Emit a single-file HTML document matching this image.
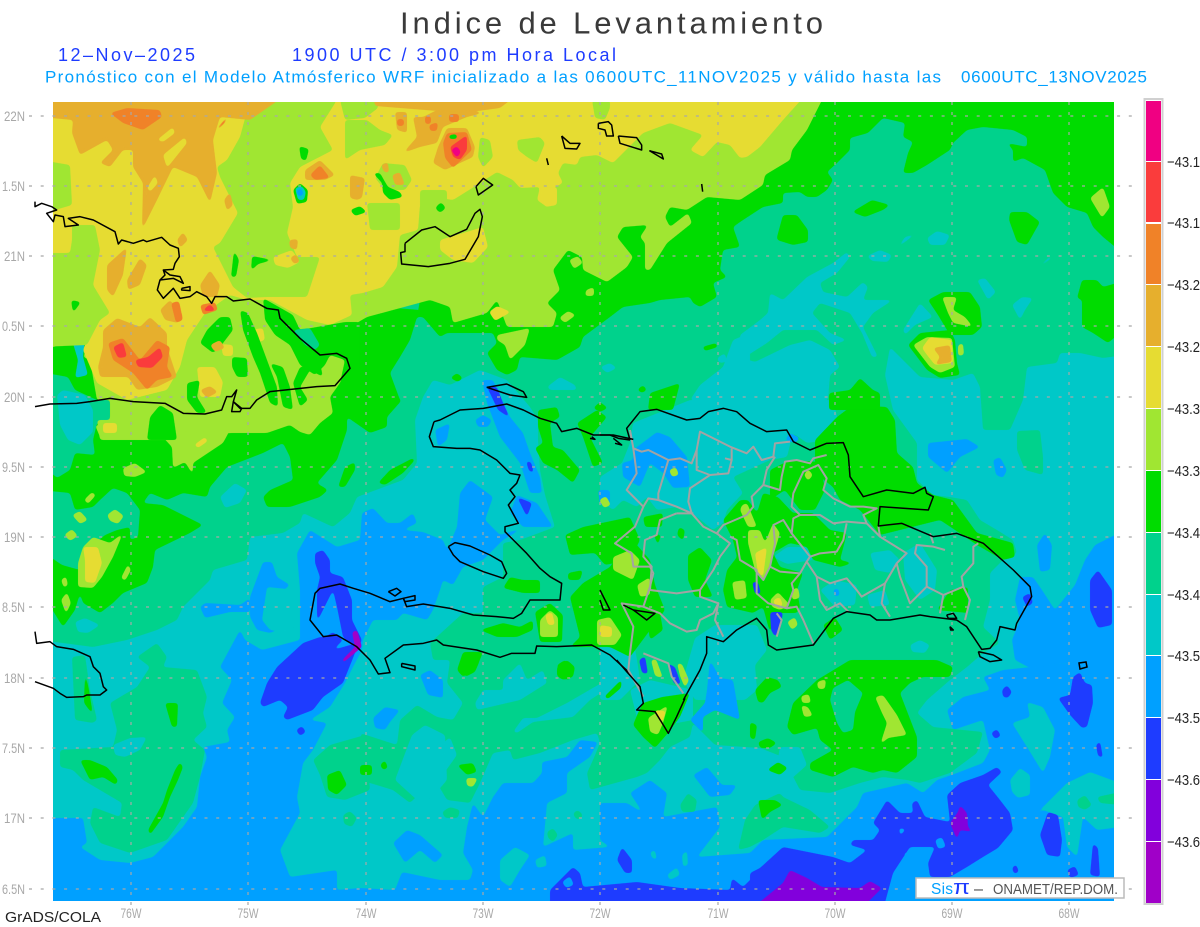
<!DOCTYPE html>
<html><head><meta charset="utf-8"><title>Indice de Levantamiento</title>
<style>
html,body{margin:0;padding:0;background:#fff}
svg{display:block;font-family:"Liberation Sans",sans-serif}
.m{fill:#f00082}.r{fill:#fa3c3c}.o{fill:#f08228}.d{fill:#e6af2d}.y{fill:#e6dc32}.l{fill:#a0e632}.g{fill:#00dc00}.e{fill:#00d28c}.t{fill:#00c8c8}.s{fill:#00a0ff}.b{fill:#1e3cff}.v{fill:#8200dc}.p{fill:#a000c8}
.mg polygon{filter:url(#rd)}
.k polyline{fill:none;stroke:#000;stroke-width:4.5;stroke-linejoin:round}
.h polyline{fill:none;stroke:#a3a3a3;stroke-width:6;stroke-linejoin:round}
.ax{fill:#a8a8a8;font-size:14px}
.cb{font-size:15px;fill:#222}
</style></head><body>
<svg width="1200" height="927" viewBox="0 0 1200 927" xmlns="http://www.w3.org/2000/svg">
<defs><clipPath id="mp"><rect x="53" y="102" width="1061" height="799"/></clipPath>
<filter id="rd" x="-50%" y="-50%" width="200%" height="200%" color-interpolation-filters="sRGB"><feGaussianBlur stdDeviation="1.5"/><feComponentTransfer><feFuncA type="linear" slope="7" intercept="-3"/></feComponentTransfer></filter></defs>
<rect width="1200" height="927" fill="#fff"/>
<g clip-path="url(#mp)"><g class="mg">
<rect class="t" x="53" y="102" width="1061" height="799"/>
<!-- sky south -->
<polygon class="s" points="40,818 83,818 87,843 80,847 100,860 130,863 153,857 183,827 197,807 200,777 207,757 203,747 230,742 227,730 235,717 222,703 232,680 220,667 240,630 245,640 262,650 300,640 300,590 297,553 310,530 337,547 360,540 362,513 373,508 387,523 400,523 413,513 417,523 403,530 423,532 443,540 447,550 457,527 460,493 470,480 493,497 485,520 500,535 525,527 503,540 483,560 463,567 453,585 443,580 440,590 433,610 427,620 403,613 397,620 373,620 363,640 362,650 353,667 345,683 330,707 310,720 327,723 313,750 303,763 297,797 300,813 280,850 290,877 337,870 337,890 360,888 395,890 402,872 440,880 470,880 473,870 463,853 467,827 473,803 483,817 493,797 503,783 533,783 542,773 542,762 567,757 580,740 598,742 590,757 567,773 567,793 547,803 543,847 573,833 573,850 610,847 600,840 600,803 627,803 643,813 630,793 650,780 667,793 663,817 717,807 720,827 697,857 750,853 763,840 827,837 857,807 863,793 907,783 923,793 937,780 957,773 983,763 990,750 983,720 953,730 947,710 963,697 990,690 983,677 1003,670 1067,663 1125,658 1125,915 40,915"/>
<polygon class="s" points="250,597 263,562 272,562 277,577 290,585 280,593 267,617 277,630 270,633 257,630 250,617"/>
<polygon class="s" points="200,607 205,603 240,605 250,598 250,612 230,612 205,618"/>
<!-- seagreen main -->
<polygon class="e" points="40,90 40,640 93,647 127,640 157,630 177,620 183,607 210,580 213,570 247,560 250,537 283,533 300,523 303,513 333,527 350,513 357,497 403,480 417,463 415,420 423,397 433,380 450,385 480,370 507,380 530,407 538,420 538,440 540,470 545,495 555,527 520,540 503,543 503,577 483,587 483,613 463,613 430,643 433,660 450,660 447,683 463,703 453,720 437,717 417,705 400,720 397,745 360,733 367,757 360,780 393,790 410,803 423,790 413,770 450,737 457,755 437,783 447,800 470,803 480,783 493,753 510,750 513,760 540,753 573,740 597,733 600,743 593,760 587,773 590,790 637,777 647,773 660,760 670,747 690,737 693,723 715,745 760,748 783,757 800,790 830,793 860,783 883,777 907,780 920,783 950,773 977,753 983,732 933,727 917,713 927,700 950,680 967,667 983,653 1000,643 983,627 990,600 990,573 1003,560 1017,553 1013,540 997,530 980,520 967,500 950,497 933,495 917,480 917,443 893,410 885,375 890,347 920,377 953,380 973,373 980,387 983,430 1010,430 1023,400 1027,367 1057,363 1060,353 1080,353 1103,358 1125,355 1125,90"/>
<polygon class="e" points="157,643 167,657 163,667 197,670 207,697 203,713 207,727 193,740 205,750 200,777 193,803 167,840 130,853 100,843 90,823 93,807 120,817 122,803 83,780 73,770 60,767 60,750 113,747 117,730 110,703 137,687 150,667 137,657"/>
<polygon class="e" points="72,657 85,655 90,690 97,720 93,723 75,720"/>
<polygon class="e" points="738,850 745,820 755,805 765,800 780,793 783,797 810,810 830,827 820,833 783,827 763,840 750,847"/>
<polygon class="e" points="313,760 330,745 365,735 370,790 345,800 327,797 320,775"/>
<polygon class="e" points="343,815 350,811 357,818 352,827 344,824"/>
<polygon class="e" points="442,812 450,807 460,810 458,818 445,818"/>
<polygon class="e" points="573,813 578,810 583,815 580,820 575,818"/>
<polygon class="e" points="547,832 553,828 558,835 553,842 548,838"/>
<polygon class="e" points="680,805 688,793 697,800 695,812 682,812"/>
<polygon class="e" points="1017,431 1040,430 1043,457 1043,475 1025,470 1017,450"/>
<!-- teal overlays -->
<polygon class="t" points="113,745 130,738 147,737 140,750 125,757 115,755"/>
<polygon class="t" points="267,587 297,590 297,627 282,632 270,630 262,620"/>
<polygon class="t" points="740,335 760,320 768,313 770,293 783,300 807,277 833,263 847,252 850,257 837,273 820,283 823,292 847,297 863,282 868,287 863,300 893,300 873,313 863,327 878,357 872,357 862,333 850,313 820,303 812,313 830,333 847,340 833,345 817,330 783,330 767,343 745,357 740,357"/>
<polygon class="t" points="740,357 755,362 790,345 810,340 830,350 840,367 830,375 828,400 740,410"/>
<polygon class="t" points="750,333 733,340 723,367 700,385 690,400 750,410"/>
<polygon class="t" points="690,400 833,400 838,420 827,440 807,443 793,433 787,457 770,460 733,477 743,493 727,510 723,523 713,530 697,517 677,507 657,510 647,497 637,507 623,500 613,510 600,500 600,477 622,463 630,443 633,423"/>
<polygon class="t" points="773,557 787,547 813,547 813,560 787,564"/>
<polygon class="t" points="820,590 835,580 857,585 855,605 835,607"/>
<polygon class="t" points="867,595 885,590 890,605 870,607"/>
<polygon class="t" points="870,553 890,550 900,560 890,573 875,570"/>
<polygon class="t" points="903,553 920,543 937,570 935,590 920,600 905,580"/>
<polygon class="t" points="910,645 920,640 930,645 925,653 912,652"/>
<polygon class="t" points="600,617 630,620 637,660 640,680 620,700 600,700"/>
<polygon class="t" points="695,638 715,625 757,625 767,650 755,665 757,690 745,700 695,700 683,680"/>
<polygon class="t" points="630,690 650,680 693,690 693,720 640,730"/>
<polygon class="t" points="475,703 483,690 503,690 503,680 520,663 527,680 543,670 547,683 520,700 490,707 477,710"/>
<polygon class="t" points="513,732 523,718 537,718 567,703 610,678 610,687 590,700 573,717 533,722 517,733"/>
<polygon class="t" points="412,735 425,725 445,735 447,780 430,800 417,800 395,780"/>
<polygon class="t" points="500,860 515,847 530,855 520,870 510,887 500,880"/>
<polygon class="t" points="535,860 545,855 547,866 537,868"/>
<polygon class="t" points="667,875 677,867 680,875 670,880"/>
<polygon class="t" points="650,852 655,850 657,860 652,858"/>
<polygon class="t" points="682,855 687,850 688,865 683,867"/>
<polygon class="t" points="780,747 800,747 807,765 790,780 790,793 780,793 775,775"/>
<polygon class="t" points="1027,702 1043,707 1055,730 1050,757 1043,773 1027,747 1012,723 1030,717"/>
<polygon class="t" points="1010,780 1020,768 1030,775 1030,795 1018,798 1012,792"/>
<polygon class="t" points="1017,833 1043,807 1067,783 1090,772 1120,783 1120,827 1097,830 1083,817 1077,857 1067,847 1063,817 1043,810"/>
<polygon class="e" points="1077,800 1085,795 1092,805 1085,810 1078,807"/>
<polygon class="e" points="1097,797 1120,792 1120,805 1100,803"/>
<polygon class="t" points="220,497 235,483 247,490 240,503 225,508"/>
<polygon class="t" points="45,430 95,430 105,447 95,452 85,447 77,437 45,440"/>
<polygon class="t" points="75,622 85,618 100,625 88,633 78,632"/>
<polygon class="t" points="367,350 372,347 378,358 370,360"/>
<polygon class="t" points="600,367 610,363 617,368 607,373"/>
<polygon class="t" points="547,387 560,377 575,385 577,390 550,390"/>
<polygon class="t" points="717,358 725,353 727,362 719,363"/>
<polygon class="t" points="927,238 937,231 950,235 945,245 930,245"/>
<polygon class="t" points="897,248 905,237 917,233 905,242 898,248"/>
<polygon class="t" points="867,256 880,250 892,255 888,262 872,261"/>
<polygon class="t" points="1040,265 1050,256 1052,258 1043,265"/>
<polygon class="t" points="977,280 985,278 996,292 988,300"/>
<polygon class="t" points="1012,305 1022,297 1033,298 1025,310 1020,320"/>
<polygon class="t" points="903,330 920,303 933,317 915,325 905,335"/>
<!-- sky overlays -->
<polygon class="s" points="482,380 493,380 510,417 523,433 530,453 540,477 542,493 530,493 520,463 500,437 487,403"/>
<polygon class="s" points="517,495 537,503 553,527 523,527 510,513"/>
<polygon class="s" points="475,420 483,415 492,420 488,427 478,427"/>
<polygon class="s" points="435,430 450,423 447,440 438,447"/>
<polygon class="s" points="598,490 610,490 610,505 600,505"/>
<polygon class="s" points="633,450 657,432 670,437 687,457 690,487 673,488 663,473 650,463 640,487 623,477 622,463 633,460"/>
<polygon class="s" points="785,440 790,433 800,438 795,443"/>
<polygon class="s" points="928,443 967,439 980,447 960,457 947,473 928,457"/>
<polygon class="s" points="993,460 1000,457 1007,470 1003,478 996,475"/>
<polygon class="s" points="833,590 838,588 840,595 835,597"/>
<polygon class="s" points="1020,577 1033,577 1042,590 1055,610 1075,585 1085,560 1095,545 1125,530 1125,660 1067,663 1030,668 1015,660 1012,640 1020,620 1015,600"/>
<polygon class="s" points="1037,545 1045,533 1052,545 1050,570 1040,572"/>
<polygon class="s" points="420,675 430,670 443,680 443,698 428,695"/>
<polygon class="s" points="373,718 385,707 400,710 390,722 385,730 375,728"/>
<polygon class="s" points="393,843 407,830 420,835 443,855 435,863 420,850 405,863"/>
<polygon class="s" points="710,660 720,678 733,680 740,720 715,710 703,717 703,733 690,720 705,703 707,690"/>
<polygon class="s" points="693,775 707,767 722,785 737,785 730,795 710,797"/>
<!-- blues -->
<polygon class="b" points="260,703 267,683 277,667 303,643 320,637 325,637 333,632 343,640 333,650 357,643 355,653 343,683 323,697 313,710 287,720 283,717 288,707 280,700 263,707"/>
<polygon class="b" points="315,553 323,550 330,560 330,573 343,577 352,600 352,620 362,640 357,650 343,637 337,607 333,590 323,610 317,622 317,590 320,577 315,563"/>
<polygon class="b" points="296,730 302,726 306,732 300,736"/>
<polygon class="b" points="487,387 497,387 503,403 510,418 498,410"/>
<polygon class="b" points="517,497 532,503 527,517"/>
<polygon class="b" points="526,461 531,462 534,473 529,471"/>
<polygon class="p" points="352,632 357,630 362,647 343,663 342,660 355,647"/>
<polygon class="b" points="550,890 560,880 573,867 580,873 583,887 637,882 680,888 730,890 732,878 743,887 760,870 760,910 550,910"/>
<polygon class="s" points="562,882 570,876 574,885 566,888"/>
<polygon class="b" points="622,847 632,860 632,873 625,873 617,860"/>
<polygon class="b" points="750,873 760,868 783,847 833,857 850,863 867,850 850,845 853,840 873,840 880,830 873,823 887,800 900,813 913,813 912,803 917,800 925,817 950,822 947,795 960,783 983,775 997,767 1002,772 988,785 1000,800 1010,813 1013,830 998,848 983,857 967,867 950,877 930,877 928,863 935,847 910,847 893,873 883,910 750,910"/>
<polygon class="s" points="904,853 913,851 914,860 906,861"/>
<polygon class="s" points="899,828 906,829 900,836"/>
<polygon class="s" points="935,840 942,837 946,847 938,849"/>
<polygon class="v" points="750,910 783,883 790,870 807,878 822,887 860,888 870,881 882,888 860,910"/>
<polygon class="v" points="960,805 967,813 968,827 973,832 960,830 957,840 953,830 950,823 958,812"/>
<polygon class="b" points="1040,835 1048,812 1058,815 1062,840 1060,857 1047,855"/>
<polygon class="b" points="1090,875 1093,843 1098,848 1100,877"/>
<polygon class="b" points="1080,672 1085,683 1092,685 1093,703 1087,727 1082,728 1070,715 1058,698 1070,695 1073,677"/>
<polygon class="b" points="1002,690 1007,685 1012,692 1008,698 1003,697"/>
<polygon class="b" points="991,733 997,729 1001,736 995,739"/>
<polygon class="b" points="1096,745 1100,741 1103,758 1098,756"/>
<polygon class="b" points="1012,868 1016,864 1019,872 1014,874"/>
<polygon class="b" points="1067,870 1075,866 1079,875 1070,878"/>
<polygon class="b" points="1090,580 1098,570 1112,590 1112,625 1098,628 1090,610"/>
<polygon class="b" points="1022,597 1030,593 1033,603 1027,607"/>
<!-- green -->
<polygon class="g" points="827,90 1125,90 1125,255 1103,237 1093,227 1087,213 1067,207 1053,193 1045,170 1023,158 1013,162 1013,150 1007,143 1027,147 1027,137 1013,130 983,127 967,130 953,143 950,150 927,165 913,173 903,173 908,153 913,142 903,137 905,123 883,118 868,133 850,138 850,150 837,163 827,172 833,180 827,190 817,197 807,197 800,192 783,193 783,203 763,207 740,222 750,215 733,227 740,247 723,250 720,270 727,277 713,283 717,297 700,307 693,303 690,297 660,300 650,303 623,307 610,317 583,337 580,347 557,360 520,357 517,370 507,375 497,370 487,353 497,343 493,333 447,333 440,337 423,317 417,317 420,300 560,240"/>
<polygon class="g" points="40,347 72,330 100,317 300,300 420,310 423,317 417,317 410,340 400,357 390,373 400,400 402,400 387,417 387,427 370,433 347,417 347,430 337,460 317,483 327,490 320,497 290,507 267,507 263,497 270,490 293,480 290,457 283,443 263,453 227,467 210,487 207,497 183,493 167,500 150,493 143,503 163,505 193,520 203,525 190,533 155,550 153,567 147,583 123,593 113,603 100,613 83,603 80,593 75,610 63,627 40,590"/>
<polygon class="e" points="40,372 68,377 75,390 97,400 110,400 110,420 97,423 93,440 95,455 75,453 70,470 57,478 40,463"/>
<polygon class="t" points="57,395 63,390 85,395 93,410 93,432 80,445 68,440 60,425"/>
<polygon class="t" points="72,340 85,338 83,357 88,375 75,378 78,360"/>
<polygon class="e" points="40,490 70,493 75,510 93,507 100,500 113,488 127,493 140,510 138,537 130,540 130,527 117,530 105,535 93,545 85,555 80,570 62,565 40,550"/>
<polygon class="g" points="378,483 390,470 413,458 415,460 403,473 385,485"/>
<polygon class="g" points="338,487 345,467 355,462 355,470 345,487"/>
<polygon class="g" points="312,490 320,485 328,490 320,497"/>
<polygon class="g" points="450,378 457,373 463,378 458,382"/>
<polygon class="g" points="637,390 643,385 647,390 642,393"/>
<polygon class="g" points="650,393 680,383 673,410 648,410"/>
<polygon class="g" points="593,408 600,402 608,408 600,412"/>
<polygon class="g" points="702,347 716,343 718,347 705,351"/>
<polygon class="g" points="538,410 557,407 560,417 550,423 553,447 563,450 580,470 573,483 557,470 543,463 535,448 543,443 538,427"/>
<polygon class="g" points="577,423 597,410 607,417 590,437 603,463 593,467 583,437"/>
<polygon class="g" points="583,527 630,517 640,540 630,560 605,565 595,553 570,555 565,535"/>
<polygon class="g" points="570,597 583,583 610,567 630,537 650,560 655,585 665,610 630,657 610,647 570,647 580,637"/>
<polygon class="g" points="568,573 583,570 580,580 568,580"/>
<polygon class="g" points="503,588 510,577 523,580 540,580 540,593 523,593"/>
<polygon class="g" points="480,630 503,623 520,627 533,620 533,630 517,637 497,637"/>
<polygon class="g" points="535,612 550,603 563,615 562,642 540,642"/>
<polygon class="g" points="463,652 483,652 477,667 463,677 457,670"/>
<polygon class="g" points="557,667 567,660 575,667 573,677 563,680 557,676"/>
<polygon class="g" points="815,440 837,417 853,405 887,407 895,420 897,453 913,467 917,483 933,495 953,500 977,533 1013,543 1015,557 1003,560 977,545 955,530 940,520 900,530 880,535 860,510 840,500 833,487 815,473"/>
<polygon class="g" points="829,393 850,390 860,378 873,390 880,393 880,410 829,410"/>
<polygon class="g" points="770,470 790,460 820,462 825,490 815,510 800,510 785,490 770,500"/>
<polygon class="g" points="723,520 740,500 748,500 757,513 763,493 778,497 793,513 813,513 830,530 847,533 840,560 853,563 840,567 813,560 807,547 790,543 773,553 780,567 803,573 797,590 800,607 797,613 777,613 770,633 763,607 753,613 727,607 723,590 727,570 737,557 733,540"/>
<polygon class="g" points="643,517 663,513 662,527 645,527"/>
<polygon class="g" points="654,535 661,534 658,546"/>
<polygon class="g" points="679,527 685,530 683,541 677,535"/>
<polygon class="g" points="688,555 700,547 712,560 705,580 713,597 695,597 688,580"/>
<polygon class="g" points="937,610 950,590 968,587 968,613"/>
<polygon class="g" points="823,625 835,617 843,630 830,640"/>
<polygon class="g" points="647,620 660,613 663,630 650,640"/>
<polygon class="g" points="850,660 883,660 937,660 953,667 950,677 923,677 910,683 900,693 917,737 917,757 897,773 883,770 873,773 853,767 833,777 810,770 810,763 833,750 820,740 817,728 793,735 787,727 793,703 817,680"/>
<polygon class="e" points="833,688 848,680 863,693 855,712 853,730 843,733 837,723 830,700"/>
<polygon class="g" points="755,690 767,677 778,680 782,687 770,693 763,703 758,702"/>
<polygon class="g" points="758,742 768,738 777,743 770,748 760,748"/>
<polygon class="g" points="750,722 757,725 755,740 750,738"/>
<polygon class="g" points="767,770 778,762 788,768 780,775"/>
<polygon class="g" points="758,800 775,800 783,805 770,812 762,820"/>
<polygon class="l" points="875,697 883,695 897,715 907,735 888,738 880,745 887,723 882,713"/>
<polygon class="l" points="801,696 809,694 811,703 802,703"/>
<polygon class="l" points="801,705 808,707 813,716 804,717"/>
<polygon class="l" points="817,682 826,679 825,689 818,689"/>
<polygon class="g" points="80,760 90,760 107,767 118,780 116,785 103,777 90,780"/>
<polygon class="g" points="165,703 178,703 177,727 172,727"/>
<polygon class="g" points="180,762 183,767 178,780 170,797 163,817 150,835 148,830 163,803 167,790 175,770"/>
<polygon class="g" points="327,775 340,770 347,785 337,795 328,790"/>
<polygon class="g" points="85,670 89,690 93,715 84,703"/>
<polygon class="g" points="928,300 943,292 970,292 980,307 982,327 973,335 950,335 938,315"/>
<polygon class="g" points="908,345 920,333 950,330 955,340 957,363 960,375 940,378 927,370"/>
<polygon class="g" points="1010,212 1027,212 1040,222 1027,245 1017,242 1009,220"/>
<polygon class="g" points="777,237 783,215 797,215 808,230 808,242 793,245 777,240"/>
<polygon class="g" points="852,212 872,200 890,205 883,210 865,217"/>
<polygon class="g" points="1082,280 1097,280 1103,287 1120,282 1120,333 1108,343 1093,333 1082,327 1082,300 1077,298"/>
<polygon class="l" points="1090,198 1103,187 1110,207 1102,218"/>
<!-- lime -->
<polygon class="l" points="40,90 827,90 807,130 792,150 790,160 765,175 763,185 740,200 707,197 687,210 670,207 665,217 670,227 688,213 692,223 667,243 650,270 645,270 645,243 640,237 648,225 623,227 617,237 633,257 627,267 607,282 583,270 582,257 568,250 553,270 560,290 547,303 557,313 553,327 507,327 497,300 487,313 453,323 450,307 430,300 393,310 367,317 350,327 353,345 345,370 340,383 330,397 333,413 320,423 310,435 300,432 290,425 267,433 230,433 177,440 147,440 100,440 97,420 110,420 110,400 97,400 90,360 83,357 90,343 97,330 107,318 100,317 72,330 55,347 40,347"/>
<polygon class="l" points="497,335 530,328 525,345 510,360 505,345 497,340"/>
<polygon class="l" points="158,432 230,430 223,443 193,463 193,475 185,462 173,468 172,447"/>
<polygon class="l" points="123,468 135,463 147,472 135,477 124,476"/>
<polygon class="l" points="95,425 120,425 115,437 100,437"/>
<polygon class="l" points="78,563 83,547 93,537 110,543 123,533 113,557 102,577 93,588 78,587"/>
<polygon class="l" points="107,515 115,509 124,516 118,524 110,521"/>
<polygon class="l" points="72,515 80,511 88,520 80,524"/>
<polygon class="l" points="64,535 72,529 78,536 70,541"/>
<polygon class="l" points="61,600 67,592 71,603 66,614"/>
<polygon class="l" points="61,580 66,576 68,585 64,588"/>
<polygon class="l" points="121,578 128,564 131,570 125,581"/>
<polygon class="l" points="84,500 92,492 96,495 88,504"/>
<polygon class="y" points="83,547 98,547 102,563 95,583 85,582 85,560"/>
<polygon class="y" points="194,445 205,437 208,441 198,448"/>
<!-- yellow -->
<polygon class="y" points="40,90 810,90 783,120 760,147 747,157 740,158 730,145 717,142 703,157 690,150 703,135 670,123 643,133 613,163 597,155 580,157 577,165 563,163 558,173 563,183 553,188 557,203 547,207 537,200 540,187 520,188 513,180 497,172 477,185 453,200 433,197 420,205 418,230 400,235 397,267 383,287 363,293 350,295 352,315 330,325 307,320 270,300 247,300 230,295 205,313 187,340 180,367 167,390 127,400 97,383 83,350 95,320 40,320"/>
<polygon class="y" points="440,240 483,227 488,247 473,263 453,260 440,250"/>
<polygon class="y" points="538,187 557,187 557,205 545,207"/>
<!-- lime on yellow -->
<polygon class="l" points="250,100 337,100 320,127 333,150 300,167 290,183 293,207 287,233 297,257 320,257 307,297 267,297 247,298 233,287 213,247 220,243 238,213 220,177 217,167 227,160 240,137"/>
<polygon class="l" points="40,160 70,165 72,205 55,210 40,212"/>
<polygon class="l" points="72,225 95,225 100,250 93,285 110,313 100,320 87,345 40,347 40,253 70,253 72,240"/>
<polygon class="l" points="345,120 367,120 380,130 393,135 385,145 360,150 345,160"/>
<polygon class="l" points="517,140 540,137 545,143 537,163 527,157 518,150"/>
<polygon class="l" points="480,137 490,140 493,157 483,168 478,157"/>
<polygon class="l" points="592,100 610,100 610,108 605,120 595,118"/>
<polygon class="l" points="367,203 400,203 400,230 370,230"/>
<polygon class="l" points="420,190 447,190 447,205 433,233 420,233"/>
<polygon class="l" points="383,163 405,165 412,180 405,190 385,190 375,178"/>
<polygon class="l" points="340,100 378,100 378,108 365,118 345,120"/>
<polygon class="y" points="250,330 263,328 265,340 250,345"/>
<polygon class="y" points="197,367 215,367 223,382 220,397 200,397"/>
<polygon class="y" points="221,344 233,345 233,356 223,356"/>
<polygon class="y" points="103,423 117,423 117,433 103,433"/>
<polygon class="y" points="273,257 292,250 300,262 288,268 275,265"/>
<polygon class="g" points="263,298 293,315 300,330 345,322 360,322 360,370 340,383 345,360 330,355 325,365 315,375 300,365 290,345 275,335 265,320"/>
<polygon class="e" points="293,330 310,328 320,345 315,350 305,345"/>
<polygon class="g" points="200,343 207,330 220,317 230,317 233,330 220,347 213,353"/>
<polygon class="g" points="240,310 248,313 257,333 267,360 277,387 278,407 270,403 260,373 253,357 243,330"/>
<polygon class="g" points="232,357 247,358 248,377 237,377 232,367"/>
<polygon class="g" points="187,383 200,380 197,397 207,413 197,413 187,400"/>
<polygon class="g" points="147,440 150,417 160,405 173,413 177,440"/>
<polygon class="g" points="270,363 283,367 290,387 293,410 283,407 277,377"/>
<polygon class="g" points="300,367 320,363 323,377 310,370 300,387 308,400 300,407 293,383"/>
<polygon class="g" points="299,146 309,149 306,161 301,159"/>
<polygon class="g" points="234,250 239,260 236,277 231,277"/>
<polygon class="g" points="252,256 273,260 258,264 251,271"/>
<polygon class="g" points="71,300 81,302 73,313"/>
<polygon class="g" points="293,190 300,183 308,190 307,202 297,204"/>
<polygon class="t" points="295,188 302,186 306,192 304,200 298,200"/>
<polygon class="s" points="296,191 301,188 304,194 299,197"/>
<polygon class="l" points="569,260 578,256 583,263 574,269"/>
<polygon class="l" points="586,290 594,287 594,296 585,296"/>
<polygon class="l" points="559,318 568,311 576,315 565,323"/>
<polygon class="y" points="489,312 497,306 511,312 495,321"/>
<polygon class="g" points="373,173 380,173 388,187 400,192 403,197 390,200 383,193 382,183"/>
<polygon class="g" points="435,208 441,202 446,208 440,213"/>
<polygon class="g" points="350,210 360,206 367,212 355,216"/>
<!-- gold -->
<polygon class="d" points="40,90 293,90 250,120 220,117 213,140 217,173 210,203 197,177 173,167 157,200 142,230 143,183 133,167 133,150 123,150 110,167 100,163 113,150 107,140 80,155 72,133 73,120 40,117"/>
<polygon class="y" points="157,140 173,127 175,133 163,142"/>
<polygon class="y" points="163,155 185,137 187,143 167,168"/>
<polygon class="y" points="147,188 155,175 158,183 150,192"/>
<polygon class="d" points="224,200 230,192 233,205 227,211"/>
<polygon class="d" points="177,240 183,232 188,240 180,248"/>
<polygon class="d" points="107,265 127,247 123,275 113,297 107,290"/>
<polygon class="d" points="127,280 140,258 147,265 140,285 128,290"/>
<polygon class="d" points="200,285 210,270 220,285 217,297 203,297"/>
<polygon class="d" points="160,310 170,300 183,315 178,323 165,320"/>
<polygon class="d" points="103,330 117,318 140,327 150,317 167,333 167,347 177,377 157,387 137,390 128,377 100,377 98,367 103,347"/>
<polygon class="d" points="200,390 210,386 218,392 207,398"/>
<polygon class="d" points="290,258 296,254 300,262 294,264"/>
<polygon class="d" points="350,175 365,178 362,198 357,200 350,198"/>
<polygon class="d" points="395,112 407,112 407,133 397,130"/>
<polygon class="d" points="403,153 417,137 413,117 423,117 437,110 463,107 483,113 467,117 443,127 437,143 420,147"/>
<polygon class="d" points="373,95 517,95 500,108 463,113 400,108 375,106"/>
<polygon class="d" points="433,163 445,170 473,157 475,147 467,128 447,128 438,147"/>
<polygon class="d" points="392,175 400,172 405,185 395,185"/>
<polygon class="d" points="381,165 388,162 389,173 384,172"/>
<polygon class="d" points="305,170 320,160 335,175 325,180 305,180"/>
<polygon class="d" points="289,240 298,239 297,250 290,248"/>
<polygon class="d" points="210,345 220,340 225,348 215,352"/>
<polygon class="l" points="942,297 957,297 953,310 965,317 973,327 953,323 948,313"/>
<polygon class="l" points="913,345 927,337 952,338 955,367 940,373 930,367"/>
<polygon class="y" points="922,348 930,337 952,340 953,363 935,365 927,355"/>
<polygon class="d" points="933,348 950,345 952,362 935,365 940,357"/>
<polygon class="l" points="958,345 963,343 964,355 958,356"/>
<!-- orange -->
<polygon class="o" points="110,113 127,108 160,110 162,117 143,130 123,123"/>
<polygon class="o" points="217,128 230,113 225,123 218,130"/>
<polygon class="o" points="108,343 123,338 140,360 157,340 170,347 167,367 173,377 157,380 147,390 133,373 113,360"/>
<polygon class="o" points="171,303 179,301 183,320 176,323"/>
<polygon class="o" points="200,305 215,302 218,310 203,315"/>
<polygon class="o" points="310,175 320,165 330,178 315,180"/>
<polygon class="o" points="445,158 453,168 472,150 467,132 447,133 443,143"/>
<polygon class="o" points="397,119 404,119 404,126 397,126"/>
<polygon class="o" points="425,116 431,116 431,124 425,124"/>
<polygon class="o" points="429,125 438,122 437,131 430,131"/>
<polygon class="o" points="449,114 459,114 459,122 449,122"/>
<polygon class="r" points="113,347 123,342 127,357 118,358"/>
<polygon class="r" points="135,360 148,357 160,347 163,357 152,368 138,367"/>
<polygon class="r" points="202,311 210,304 216,311"/>
<polygon class="r" points="450,147 467,135 467,150 460,160 453,157"/>
<polygon class="m" points="451,150 457,146 461,152 457,158"/>
<polygon class="g" points="449,135 457,134 457,139 449,139"/>
<!-- DR lime/yellow -->
<polygon class="l" points="742,505 747,503 757,527 748,527 740,510"/>
<polygon class="l" points="748,530 760,530 765,543 773,523 780,533 770,567 763,580 755,570 748,543"/>
<polygon class="y" points="755,553 767,547 763,577 758,573"/>
<polygon class="l" points="770,600 778,592 790,605 780,610 772,607"/>
<polygon class="y" points="773,600 780,597 783,606 776,607"/>
<polygon class="l" points="732,582 745,580 747,598 735,600"/>
<polygon class="l" points="792,590 798,587 800,598 792,600"/>
<polygon class="l" points="787,622 795,617 798,625 792,630"/>
<polygon class="l" points="613,557 630,550 640,560 633,580 613,570"/>
<polygon class="l" points="637,585 650,577 650,595 640,597"/>
<polygon class="l" points="597,620 610,617 622,635 615,645 597,645"/>
<polygon class="y" points="600,625 612,627 612,637 600,637"/>
<polygon class="l" points="540,620 550,610 558,617 558,637 540,637"/>
<polygon class="y" points="545,615 552,612 555,625 548,625"/>
<polygon class="l" points="599,500 606,496 611,505 604,508"/>
<polygon class="l" points="669,470 676,467 679,475 672,477"/>
<polygon class="l" points="804,475 808,469 813,475 808,481"/>
<polygon class="b" points="770,612 783,612 780,630 775,637 771,630"/>
<polygon class="b" points="752,582 758,582 761,594 755,594"/>
<polygon class="b" points="639,660 645,656 648,674 642,673"/>
<polygon class="l" points="651,660 656,659 663,678 655,676"/>
<polygon class="b" points="667,663 675,667 681,684 674,684"/>
<polygon class="l" points="677,663 682,664 689,680 685,688 680,676"/>
<polygon class="g" points="643,703 662,697 690,693 680,717 668,733 655,748 643,737 633,725 638,713"/>
<polygon class="l" points="648,718 668,705 663,723 658,735 650,732"/>
<polygon class="y" points="654,710 666,711 662,723"/>
<polygon class="g" points="604,697 622,679 621,688 608,699"/>
<polygon class="g" points="557,665 565,660 573,667 570,680 560,678"/>
<polygon class="g" points="460,662 480,660 475,672 465,677"/>
<polygon class="g" points="457,765 473,763 477,772 467,775"/>
<polygon class="l" points="466,778 478,778 473,787 467,786"/>
<polygon class="g" points="360,765 372,765 372,775 360,775"/>
<polygon class="g" points="380,765 385,760 388,768 383,770"/>
</g></g>

<!-- grid -->
<g stroke="#a8a8a8" stroke-width="1.2" fill="none">
<path stroke-dasharray="3 8.7" d="M29 116H1133M29 186H1133M29 256H1133M29 326H1133M29 397H1133M29 467H1133M29 537H1133M29 607H1133M29 678H1133M29 748H1133M29 818H1133M29 889H1133"/>
<path stroke-dasharray="3 7" d="M131 102V908M248 102V908M366 102V908M483 102V908M600 102V908M718 102V908M835 102V908M952 102V908M1069 102V908"/>
</g>

<!-- coast: Cuba -->
<g class="k" transform="translate(0,100) scale(.33333)">
<polyline points="105,305 105,320 125,310 155,320 170,330 140,340 160,365 165,345 190,350 195,380 235,375 205,355 240,350 280,360 345,395 355,432 365,420 400,430 430,420 440,425 485,412 510,435 535,445 538,470 525,490 520,508 490,510 495,525 480,540 472,570 490,595 520,565 540,595 570,590 590,575 620,590 635,610 645,590 680,590 700,603 750,597 800,625 835,630 840,655 900,715 960,765 1010,760 1040,775 1050,805 1005,857 950,860 810,875 770,900 750,925 720,925 700,905 710,870 695,890 680,890 665,930 615,942 550,940 495,910 400,905 330,895 270,905 230,910 150,912 105,920"/>
<polyline points="490,510 510,525 540,530 550,550 520,535 480,540"/>
<polyline points="545,565 570,560 570,572 545,570 545,565"/>
<polyline points="700,905 725,925 720,935 695,935 700,905"/>
</g>
<!-- Bahamas etc. -->
<g class="k" transform="translate(350,100) scale(.33333)">
<polyline points="745,70 775,65 785,75 790,108 770,108 765,90 745,85 745,70"/>
<polyline points="805,108 860,113 875,135 875,150 810,130 805,108"/>
<polyline points="635,108 660,130 690,130 680,147 645,145 635,108"/>
<polyline points="898,152 935,162 940,177 898,152"/>
<polyline points="590,175 595,195"/>
<polyline points="1055,252 1058,275"/>
<polyline points="378,260 400,235 428,255 385,285 378,260"/>
<polyline points="165,430 215,390 255,380 300,410 350,388 375,340 390,328 397,350 385,410 345,478 300,490 235,500 155,492 152,458 165,455 165,430"/>
</g>
<!-- Jamaica -->
<g class="k" transform="translate(50,430) scale(.33333)">
<polyline points="-45,605 -40,640 0,635 20,650 70,658 120,680 130,710 150,730 160,770 170,780 150,795 110,795 100,800 50,802 30,790 10,775 -45,755"/>
</g>
<!-- Haiti -->
<g class="k" transform="translate(290,380) scale(.33333)">
<polyline points="432,125 450,120 510,90 580,85 650,72 700,90 750,115 800,130 815,155 860,145 910,165 960,165 985,175 1020,180"/>
<polyline points="432,125 418,170 430,200 500,205 540,205 570,210 620,240 660,280 690,285 680,310 660,330 675,350 655,375 685,430 645,440 645,455 670,480 710,520 750,565 780,590 815,610 810,660 780,660 720,660 695,700 670,715 620,710 550,705 480,685 400,672 350,680 340,655 300,665 240,640 190,625 150,612 90,625 75,640 60,720 100,770 140,765 200,800 240,840 265,882 300,878 285,835 340,795 400,790 440,780 460,795 560,810 630,832 665,820 735,820 740,798 800,800 905,795 960,825 1020,880"/>
<polyline points="590,22 650,12 700,35 710,52 660,45 590,22"/>
<polyline points="475,500 495,488 540,498 600,525 635,545 650,580 640,595 580,575 510,545 490,525 475,500"/>
<polyline points="295,635 320,625 333,635 315,648 295,635"/>
<polyline points="340,655 375,647 375,660 345,665 340,655"/>
<polyline points="335,850 375,858 375,870 335,860 335,850"/>
<polyline points="905,170 915,178 900,175"/>
<polyline points="970,175 995,195 975,190"/>
</g>
<!-- gray DR provinces -->
<g class="h" transform="translate(600,400) scale(.33333)">
<polyline points="90,90 100,145 110,220 80,270 130,320 105,380 45,430 95,460 100,500 150,500 160,520 150,560 130,620 65,610 100,680 90,760 85,810 130,890"/>
<polyline points="100,145 125,155 145,150 175,165 205,180 240,175 275,190 290,150 300,95 390,140 440,160 460,140 485,180 520,170 525,130 570,125"/>
<polyline points="205,180 190,230 175,280 175,300 230,320 275,340 310,380 350,400 370,375 440,345 460,320 455,290 490,255 540,270 545,230 555,185 590,180 630,190 640,175 680,165"/>
<polyline points="290,150 290,210 330,225 385,220 395,180 395,145"/>
<polyline points="375,175 395,180"/>
<polyline points="330,225 270,265 265,305 275,340"/>
<polyline points="490,255 500,210 525,170"/>
<polyline points="130,320 145,295 175,300"/>
<polyline points="230,340 180,360 170,405 135,420 130,470 155,500 150,570 230,580 300,570 340,510 360,470 390,430 350,400"/>
<polyline points="230,340 280,340"/>
<polyline points="300,570 300,590 355,610 340,640 300,660 290,690 260,695 210,670 180,640 130,620"/>
<polyline points="355,610 345,660 370,710"/>
<polyline points="390,410 410,420 420,480 470,510 470,580 505,610 560,625 590,620 610,660 640,730"/>
<polyline points="560,625 580,570 575,550 600,520 620,485 630,470 575,400 580,355 600,345 660,345 700,370 740,365 800,370 790,345 830,325 790,320 750,320 700,295 670,270 680,235 655,195 610,215 580,280 575,320 600,345"/>
<polyline points="510,500 540,515 600,520"/>
<polyline points="465,510 490,540 510,500 525,430 520,375 550,360 575,400"/>
<polyline points="620,485 650,530 660,600 680,630 720,610 745,635"/>
<polyline points="650,530 690,550 740,535 770,570 785,590 855,550 845,610 870,650"/>
<polyline points="630,470 660,460 710,455 730,420 740,370"/>
<polyline points="800,370 840,410 920,460 890,490 900,530 930,610 980,560 980,500 945,460 950,435 1000,440 1035,450"/>
<polyline points="890,490 855,550"/>
<polyline points="980,560 1030,585 1090,560 1110,600 1095,660"/>
<polyline points="1030,585 1020,640"/>
<polyline points="1090,560 1085,530 1120,490 1120,440 1135,430"/>
<polyline points="840,410 835,378"/>
<polyline points="990,400 1000,430"/>
<polyline points="530,640 545,660 530,710"/>
<polyline points="130,760 205,790 215,830 250,880"/>
</g>
<!-- coast DR -->
<g class="k" transform="translate(600,400) scale(.33333)">
<polyline points="0,105 40,105 100,118"/>
<polyline points="90,120 80,85 120,35 170,28 260,60 300,55 325,35 370,25 410,35 450,70 500,95 560,90 580,125 630,150 680,130 730,128 745,165 750,230 790,290 860,270 940,280 975,262 980,280 1000,290 985,330 840,320 835,378 905,370 1000,410 1070,400 1150,430 1240,510 1290,560 1295,590 1250,670 1245,690 1200,680 1190,720 1170,745 1145,748 1100,680 1070,660 990,650 960,645 870,660 830,660 810,645 740,635 700,655 640,735 530,750 505,735 500,690 470,655 410,690 370,725 320,710 320,760 300,810 250,900"/>
<polyline points="1135,755 1180,765 1205,780 1170,785 1140,770 1135,755"/>
<polyline points="1040,645 1060,640 1070,655 1045,655 1040,645"/>
<polyline points="1050,680 1060,690 1052,690 1050,680"/>
<polyline points="0,570 30,630 10,630 0,600"/>
<polyline points="70,615 100,630 165,640 140,660 100,630"/>
</g>
<g class="k" transform="translate(360,660) scale(.33333)">
<polyline points="770,0 800,35 840,80 850,130 830,150 885,155 910,195 925,220 950,170 975,115"/>
</g>
<g fill="none" stroke="#000" stroke-width="1.5"><polygon points="1079,663 1086,662 1087,667 1080,669"/></g>

<!-- axis labels -->
<g class="ax" text-anchor="end" lengthAdjust="spacingAndGlyphs">
<text x="25" y="121" textLength="21" lengthAdjust="spacingAndGlyphs">22N</text><text x="25" y="191" textLength="23" lengthAdjust="spacingAndGlyphs">1.5N</text><text x="25" y="261" textLength="21" lengthAdjust="spacingAndGlyphs">21N</text><text x="25" y="331" textLength="23" lengthAdjust="spacingAndGlyphs">0.5N</text><text x="25" y="402" textLength="21" lengthAdjust="spacingAndGlyphs">20N</text><text x="25" y="472" textLength="23" lengthAdjust="spacingAndGlyphs">9.5N</text><text x="25" y="542" textLength="21" lengthAdjust="spacingAndGlyphs">19N</text><text x="25" y="612" textLength="23" lengthAdjust="spacingAndGlyphs">8.5N</text><text x="25" y="683" textLength="21" lengthAdjust="spacingAndGlyphs">18N</text><text x="25" y="753" textLength="23" lengthAdjust="spacingAndGlyphs">7.5N</text><text x="25" y="823" textLength="21" lengthAdjust="spacingAndGlyphs">17N</text><text x="25" y="894" textLength="23" lengthAdjust="spacingAndGlyphs">6.5N</text>
</g>
<g class="ax" text-anchor="middle">
<text x="131" y="918" textLength="21" lengthAdjust="spacingAndGlyphs">76W</text><text x="248" y="918" textLength="21" lengthAdjust="spacingAndGlyphs">75W</text><text x="366" y="918" textLength="21" lengthAdjust="spacingAndGlyphs">74W</text><text x="483" y="918" textLength="21" lengthAdjust="spacingAndGlyphs">73W</text><text x="600" y="918" textLength="21" lengthAdjust="spacingAndGlyphs">72W</text><text x="718" y="918" textLength="21" lengthAdjust="spacingAndGlyphs">71W</text><text x="835" y="918" textLength="21" lengthAdjust="spacingAndGlyphs">70W</text><text x="952" y="918" textLength="21" lengthAdjust="spacingAndGlyphs">69W</text><text x="1069" y="918" textLength="21" lengthAdjust="spacingAndGlyphs">68W</text>
</g>
<text x="5" y="922" font-size="15" fill="#222" textLength="96" lengthAdjust="spacingAndGlyphs">GrADS/COLA</text>

<!-- titles -->
<text x="400" y="33.5" font-size="31" fill="#3a3a3a" textLength="423">Indice de Levantamiento</text>
<text x="58" y="61" font-size="18" fill="#1e3cff" textLength="137">12–Nov–2025</text>
<text x="292" y="61" font-size="18" fill="#1e3cff" textLength="324">1900 UTC / 3:00 pm Hora Local</text>
<text x="45" y="82.5" font-size="17" fill="#00a0ff" textLength="896">Pronóstico con el Modelo Atmósferico WRF inicializado a las 0600UTC_11NOV2025 y válido hasta las</text>
<text x="961" y="82.5" font-size="17" fill="#00a0ff" textLength="186">0600UTC_13NOV2025</text>

<!-- colorbar -->
<rect x="1144.5" y="99" width="18" height="805" fill="none" stroke="#d0d0d0" stroke-width="2"/>
<g stroke="none">
<rect class="m" x="1146" y="101" width="15" height="60"/><rect class="r" x="1146" y="162" width="15" height="60"/><rect class="o" x="1146" y="224" width="15" height="60"/><rect class="d" x="1146" y="285" width="15" height="61"/><rect class="y" x="1146" y="347" width="15" height="61"/><rect class="l" x="1146" y="409" width="15" height="61"/><rect class="g" x="1146" y="471" width="15" height="61"/><rect class="e" x="1146" y="533" width="15" height="61"/><rect class="t" x="1146" y="595" width="15" height="60"/><rect class="s" x="1146" y="656" width="15" height="61"/><rect class="b" x="1146" y="718" width="15" height="61"/><rect class="v" x="1146" y="780" width="15" height="61"/><rect class="p" x="1146" y="842" width="15" height="61"/>
</g>
<g class="cb">
<text x="1167" y="167" textLength="33" lengthAdjust="spacingAndGlyphs">−43.1</text><text x="1167" y="228" textLength="33" lengthAdjust="spacingAndGlyphs">−43.1</text><text x="1167" y="290" textLength="33" lengthAdjust="spacingAndGlyphs">−43.2</text><text x="1167" y="352" textLength="33" lengthAdjust="spacingAndGlyphs">−43.2</text><text x="1167" y="414" textLength="33" lengthAdjust="spacingAndGlyphs">−43.3</text><text x="1167" y="476" textLength="33" lengthAdjust="spacingAndGlyphs">−43.3</text><text x="1167" y="538" textLength="33" lengthAdjust="spacingAndGlyphs">−43.4</text><text x="1167" y="600" textLength="33" lengthAdjust="spacingAndGlyphs">−43.4</text><text x="1167" y="661" textLength="33" lengthAdjust="spacingAndGlyphs">−43.5</text><text x="1167" y="723" textLength="33" lengthAdjust="spacingAndGlyphs">−43.5</text><text x="1167" y="785" textLength="33" lengthAdjust="spacingAndGlyphs">−43.6</text><text x="1167" y="847" textLength="33" lengthAdjust="spacingAndGlyphs">−43.6</text>
</g>

<!-- logo box -->
<rect x="916" y="878" width="208" height="20" fill="#fff" stroke="#bbb" stroke-width="1.5"/>
<text x="931" y="894" font-size="15.5" fill="#00a0ff" textLength="22">Sis</text>
<text x="953" y="894" font-size="20" fill="#1e3cff" textLength="17" lengthAdjust="spacingAndGlyphs">π</text>
<text x="974" y="894" font-size="15.5" fill="#444" textLength="9" lengthAdjust="spacingAndGlyphs">–</text>
<text x="993" y="894" font-size="15" fill="#555" textLength="125" lengthAdjust="spacingAndGlyphs">ONAMET/REP.DOM.</text>
</svg>
</body></html>
